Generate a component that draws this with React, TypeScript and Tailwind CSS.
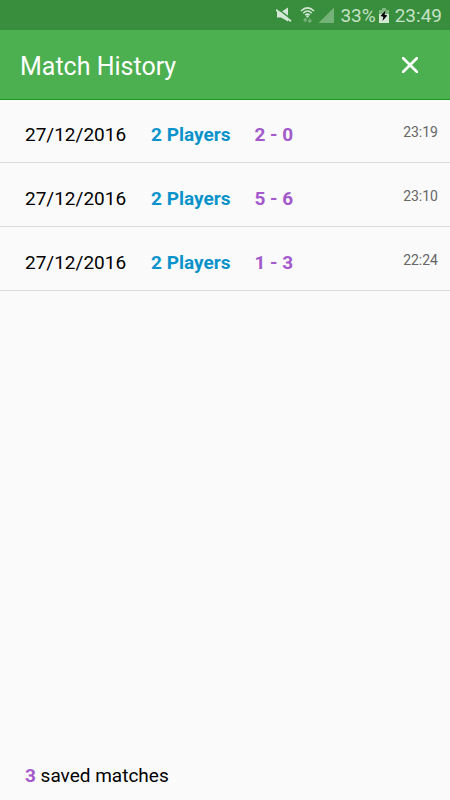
type Match = { date: string; players: string; score: string; time: string };

const matches: Match[] = [
  { date: "27/12/2016", players: "2 Players", score: "2 - 0", time: "23:19" },
  { date: "27/12/2016", players: "2 Players", score: "5 - 6", time: "23:10" },
  { date: "27/12/2016", players: "2 Players", score: "1 - 3", time: "22:24" },
];

function MutedIcon() {
  return (
    <svg className="h-4 w-4" viewBox="0 0 16 16" fill="none" aria-hidden="true">
      <path d="M1 5H5L12 .5V14.500L5 10.500H1Z" fill="#d3e8d4" />
      <path d="M.8 1L15.800 12.600" stroke="#388e3c" strokeWidth="1.500" />
      <path d="M0 2.800L15 14.300" stroke="#d3e8d4" strokeWidth="1.900" />
    </svg>
  );
}

function WifiIcon() {
  return (
    <svg className="h-4 w-4" viewBox="0 0 16 16" fill="none" aria-hidden="true">
      <g stroke="#d3e8d4" strokeWidth="1.500">
        <path d="M1 4Q7.500 -2.300 14 4" />
        <path d="M3.200 6.200Q7.500 1.900 11.800 6.200" />
        <path d="M5.200 8.300Q7.500 6 9.800 8.300" />
      </g>
      <circle cx="7.500" cy="9.400" r="1.200" fill="#d3e8d4" />
      <path
        d="M5.200 15.300V11.700M3.500 13.300L5.200 11.600L6.900 13.300M9.800 11.300V15M8.100 13.400L9.800 15.100L11.500 13.400"
        stroke="#80b983"
        strokeWidth="1.200"
      />
    </svg>
  );
}

function SignalIcon() {
  return (
    <svg className="h-4 w-4" viewBox="0 0 16 16" aria-hidden="true">
      <path d="M16 .5V16H.5Z" fill="#74b277" />
    </svg>
  );
}

function BatteryIcon() {
  return (
    <svg className="h-4 w-3" viewBox="0 0 12 16" aria-hidden="true">
      <path d="M4 1H8V3H11V7H1V3H4Z" fill="#7fb982" />
      <path d="M1 7H11V16H1Z" fill="#d3e8d4" />
      <path d="M7.500 3.500L2.500 9L5.300 9.800L4.500 14L9.300 8.500L6.600 7.800Z" fill="#000" />
    </svg>
  );
}

export default function App() {
  return (
    <div className="flex min-h-screen flex-col bg-[#fafafa] font-[Roboto,sans-serif] text-[19px] leading-6 text-black">
      <div className="flex h-[30px] items-center justify-end bg-[#388e3c] pt-0.5 pr-2 text-[#c5e1c6]">
        <div className="mr-1.5 flex items-center pb-0.5">
          <MutedIcon />
          <span className="mr-0.5 ml-2">
            <WifiIcon />
          </span>
          <SignalIcon />
        </div>
        <span>33%</span>
        <span className="mr-[5px] ml-0.5 pb-0.5">
          <BatteryIcon />
        </span>
        <span>23:49</span>
      </div>

      <header className="flex h-[70px] items-center justify-between border-b border-[#169b1b] bg-[#4caf50] pr-7 pl-5 text-white">
        <h1 className="pt-1 text-[25px] leading-8">Match History</h1>
        <button type="button" aria-label="Close" className="p-1">
          <svg className="h-4 w-4" viewBox="0 0 16 16" fill="none" aria-hidden="true">
            <path d="M0 0L16 16M16 0L0 16" stroke="currentColor" strokeWidth="2.700" />
          </svg>
        </button>
      </header>

      <main className="-mt-px flex-1">
        <ul>
          {matches.map((match) => (
            <li
              key={match.time}
              className="flex h-16 items-start border-b border-[#dcdcdc] pt-6 pr-3 pl-[25px]"
            >
              <span>{match.date}</span>
              <span className="ml-[25px] font-bold text-[#0a93cb]">{match.players}</span>
              <span className="ml-6 font-bold text-[#a359cb]">{match.score}</span>
              <time className="ml-auto text-sm leading-[18px] text-[#666]">{match.time}</time>
            </li>
          ))}
        </ul>
      </main>

      <footer className="px-[25px] pb-3">
        <span className="font-bold text-[#a359cb]">3</span> saved matches
      </footer>
    </div>
  );
}
